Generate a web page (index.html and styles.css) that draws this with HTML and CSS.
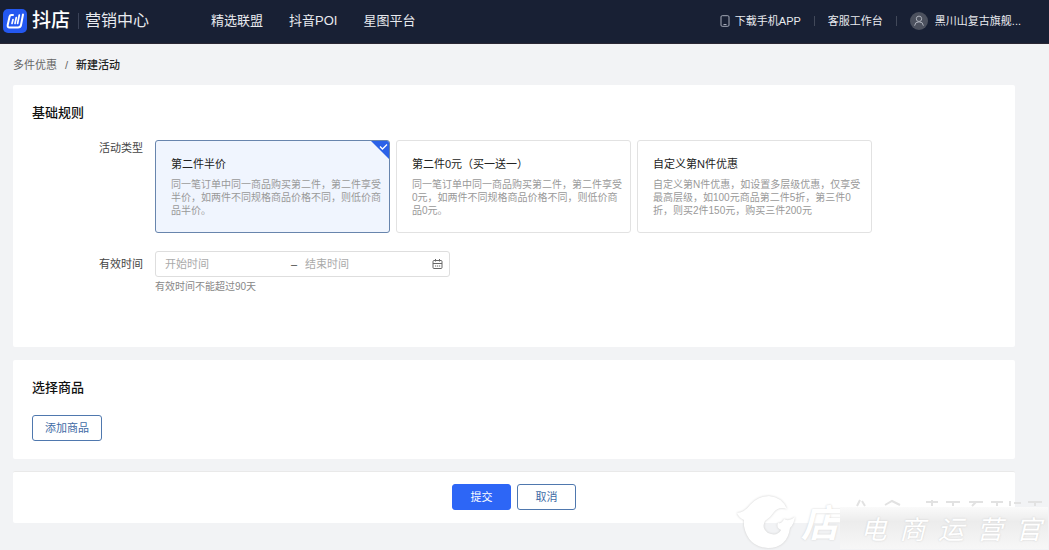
FILE: index.html
```html
<!DOCTYPE html>
<html lang="zh-CN">
<head>
<meta charset="utf-8">
<title>新建活动</title>
<link rel="stylesheet" href="styles.css">
</head>
<body>
<header class="topbar">
  <div class="brand">
    <svg class="brand-icon" viewBox="0 0 24 24" aria-hidden="true">
      <rect width="24" height="24" rx="5" fill="#2458f0"/>
      <path d="M10 6H8.500Q7 6 6.600 7.500L4.700 16Q4.300 18.500 6.500 18.500H15Q17.500 18.500 18 16L20 5.500" fill="none" stroke="#fff" stroke-width="2" stroke-linecap="round"/>
      <path d="M10 10.500L9 14.500M13.300 8.500L12 14.500M16.300 6L14.600 14.500" fill="none" stroke="#fff" stroke-width="1.700" stroke-linecap="round"/>
    </svg>
    <span class="brand-name">抖店</span>
    <span class="brand-section">营销中心</span>
  </div>
  <nav class="main-nav">
    <a href="#">精选联盟</a>
    <a href="#">抖音POI</a>
    <a href="#">星图平台</a>
  </nav>
  <div class="account">
    <a href="#" class="app-link">
      <svg class="phone-icon" viewBox="0 0 10 12" aria-hidden="true"><rect x="1" y=".7" width="8" height="10.600" rx="1.200" fill="none" stroke="#a6abb8"/><path d="M3.500 9.500h3" stroke="#a6abb8"/></svg>
      下载手机APP</a>
    <a href="#" class="service-link">客服工作台</a>
    <a href="#" class="user-link">
      <svg class="avatar" viewBox="0 0 18 18" aria-hidden="true"><circle cx="9" cy="9" r="9" fill="#4c515e"/><circle cx="9" cy="6.800" r="2.700" fill="none" stroke="#aeb2bc"/><path d="M4.600 13.700Q4.900 9.800 9 9.800T13.400 13.700" fill="none" stroke="#aeb2bc"/></svg>
      黑川山复古旗舰...</a>
  </div>
</header>

<main class="page">
  <nav class="crumbs"><a href="#">多件优惠</a><span>/</span><strong>新建活动</strong></nav>

  <section class="panel rules">
    <h2>基础规则</h2>
    <div class="field">
      <span class="label" id="type-label">活动类型</span>
      <div class="options" role="radiogroup" aria-labelledby="type-label">
        <label class="option">
          <input type="radio" name="type" checked>
          <svg class="corner" viewBox="0 0 18 18" aria-hidden="true"><path d="M0 0H16Q18 0 18 2V18Z" fill="#2b62e8"/><path d="M9 5.500L11.500 8L16 3.500" fill="none" stroke="#fff" stroke-width="1.300"/></svg>
          <span class="option-title">第二件半价</span>
          <span class="option-text">同一笔订单中同一商品购买第二件，第二件享受<br>半价，如两件不同规格商品价格不同，则低价商<br>品半价。</span>
        </label>
        <label class="option">
          <input type="radio" name="type">
          <span class="option-title">第二件0元（买一送一）</span>
          <span class="option-text">同一笔订单中同一商品购买第二件，第二件享受<br>0元，如两件不同规格商品价格不同，则低价商<br>品0元。</span>
        </label>
        <label class="option">
          <input type="radio" name="type">
          <span class="option-title">自定义第N件优惠</span>
          <span class="option-text">自定义第N件优惠，如设置多层级优惠，仅享受<br>最高层级，如100元商品第二件5折，第三件0<br>折，则买2件150元，购买三件200元</span>
        </label>
      </div>
    </div>
    <div class="field">
      <label class="label centered" for="start">有效时间</label>
      <div>
        <div class="range">
          <input id="start" class="start" type="text" placeholder="开始时间">
          <span class="dash">–</span>
          <input class="end" type="text" placeholder="结束时间" aria-label="结束时间">
          <svg class="calendar" viewBox="0 0 11 11" aria-hidden="true"><rect x="1" y="1.500" width="9" height="8" rx="1" fill="none" stroke="#666"/><path d="M1 4.500H10M3.500 0V2.500M7.500 0V2.500M3 7H4.200M5 7H6.200M7 7H8.200" stroke="#666"/></svg>
        </div>
        <p class="hint">有效时间不能超过90天</p>
      </div>
    </div>
  </section>

  <section class="panel goods">
    <h2>选择商品</h2>
    <button type="button" class="btn add">添加商品</button>
  </section>

  <footer class="panel actions">
    <button type="submit" class="btn primary">提交</button>
    <button type="button" class="btn">取消</button>
  </footer>
</main>

<div class="watermark">
  <svg class="fish" viewBox="0 0 60 54" aria-hidden="true"><path d="M0 18Q8 17 13 10Q21 1 32 1Q45 2 50 14Q42 11 37 17Q33 23 28 26Q24 33 31 38Q40 42 44 35Q39 33 41 28Q45 29 47 24Q52 27 58 22Q57 29 53 33Q50 53 31 53Q11 52 7 31L7 25Q2 23 0 18Z"/></svg>
  <span class="mark-shop">店</span>
  <div class="mark-side">
    <svg class="mark-strokes" viewBox="0 0 208 8" aria-hidden="true"><path d="M20 1L17 7M22 2L25 7M45 6L52 2L60 6M86 3H98M92 1V7M106 3H120M113 2V7M129 3H143M136 3L132 7M151 3H163M157 3V7M170 2V7M174 4H181M188 3H202M195 3V7"/></svg>
    <div class="mark-box"><span>电</span><span>商</span><span>运</span><span>营</span><span>官</span></div>
  </div>
</div>
</body>
</html>
```
FILE: styles.css
```css
* { box-sizing: border-box; }

body {
  margin: 0;
  min-height: 100vh;
  position: relative;
  background: #f2f3f5;
  color: #222;
  font: 11px/16px "Liberation Sans", "Noto Sans CJK SC", sans-serif;
}

a { color: inherit; text-decoration: none; }

.topbar {
  display: flex;
  align-items: center;
  height: 44px;
  padding: 0 28px 2px 3px;
  background: #182034;
  border-bottom: 1px solid #2a2734;
  color: #e8eaef;
  white-space: nowrap;
}

.brand { display: flex; align-items: center; line-height: 24px; }
.brand-icon { width: 24px; height: 24px; }
.brand-name { margin-left: 5px; font-size: 19px; font-weight: 500; color: #fff; }
.brand-section {
  margin-left: 8px;
  padding-left: 6px;
  font-size: 16px;
  line-height: 16px;
  border-left: 1px solid #3a4257;
}

.main-nav { display: flex; gap: 26px; margin-left: 62px; font-size: 13px; }

.account { display: flex; align-items: center; margin-left: auto; }
.account a { display: flex; align-items: center; line-height: 18px; }
.phone-icon { width: 10px; height: 12px; margin-right: 5px; }
.service-link::before, .user-link::before {
  content: "";
  width: 1px;
  height: 10px;
  margin: 0 13px;
  background: #414859;
}
.avatar { width: 18px; height: 18px; margin-right: 7px; }

.page { padding: 12px 34px 26px 13px; }

.crumbs { display: flex; gap: 8px; line-height: 18px; color: #666; }
.crumbs strong { font-weight: 500; color: #222; }

.panel { background: #fff; border-radius: 2px; padding: 19px; }
.panel h2 { margin: 0; font-size: 13px; line-height: 18px; font-weight: 500; color: #111; }

.rules { margin-top: 11px; min-height: 262px; }
.field { display: flex; gap: 12px; margin-top: 18px; }
.label { width: 111px; text-align: right; color: #444; flex: none; }
.label.centered { line-height: 26px; }

.options { display: flex; gap: 6px; }
.option {
  position: relative;
  width: 235px;
  min-height: 93px;
  padding: 15px;
  border: 1px solid #e2e2e2;
  border-radius: 3px;
  white-space: nowrap;
}
.option input { position: absolute; opacity: 0; margin: 0; }
.option:has(input:checked) { background: #f0f5fe; border-color: #6885ad; }
.option-title { display: block; color: #222; }
.option-text { display: block; margin-top: 6px; font-size: 10px; line-height: 13px; color: #999; }
.corner { position: absolute; top: 0; right: 0; width: 18px; height: 18px; }

.range {
  display: flex;
  align-items: center;
  width: 295px;
  height: 26px;
  padding: 0 6px 0 9px;
  border: 1px solid #dedede;
  border-radius: 3px;
}
.range input {
  min-width: 0;
  padding: 0;
  border: 0;
  outline: 0;
  background: none;
  font: inherit;
}
.range input::placeholder { color: #aaa; opacity: 1; }
.start { width: 126px; }
.dash { width: 14px; color: #444; }
.end { flex: 1; }
.calendar { width: 11px; height: 11px; }
.hint { margin: 2px 0 0; font-size: 10px; color: #888; }

.goods { margin-top: 13px; padding-bottom: 18px; }

.btn {
  height: 26px;
  width: 59px;
  padding: 0;
  border: 1px solid #4f78ae;
  border-radius: 3px;
  background: #fff;
  color: #416ba5;
  font: inherit;
}
.btn.add { display: block; width: 70px; margin-top: 18px; }
.btn.primary { background: #2d66f6; border-color: #2d66f6; color: #fff; }

.actions {
  display: flex;
  justify-content: center;
  gap: 6px;
  margin-top: 12px;
  padding: 12px 19px 13px;
  border-top: 1px solid #e9e9e9;
}

.watermark {
  position: absolute;
  right: 1px;
  bottom: 1px;
  display: flex;
  align-items: flex-end;
  color: #fff;
  pointer-events: none;
}
.fish { width: 60px; height: 54px; fill: #fff; filter: drop-shadow(0 0 1px #ccc); }
.mark-shop {
  margin: 0 1px 2px 4px;
  font-size: 38px;
  line-height: 46px;
  font-weight: 700;
  font-style: italic;
  text-shadow: 0 0 2px #ccc;
}
.mark-strokes {
  display: block;
  width: 208px;
  height: 8px;
  fill: none;
  stroke: #e2e2e2;
  stroke-width: 2;
}
.mark-box {
  display: flex;
  justify-content: space-around;
  width: 208px;
  height: 42px;
  padding: 0 0 0 14px;
  background: linear-gradient(#fafafa, #ececec 35%, #f7f7f7);
  font-family: "Noto Sans CJK SC", sans-serif;
  font-size: 26px;
  font-style: italic;
  line-height: 42px;
  text-shadow: 0 0 2px #ccc;
}
```
